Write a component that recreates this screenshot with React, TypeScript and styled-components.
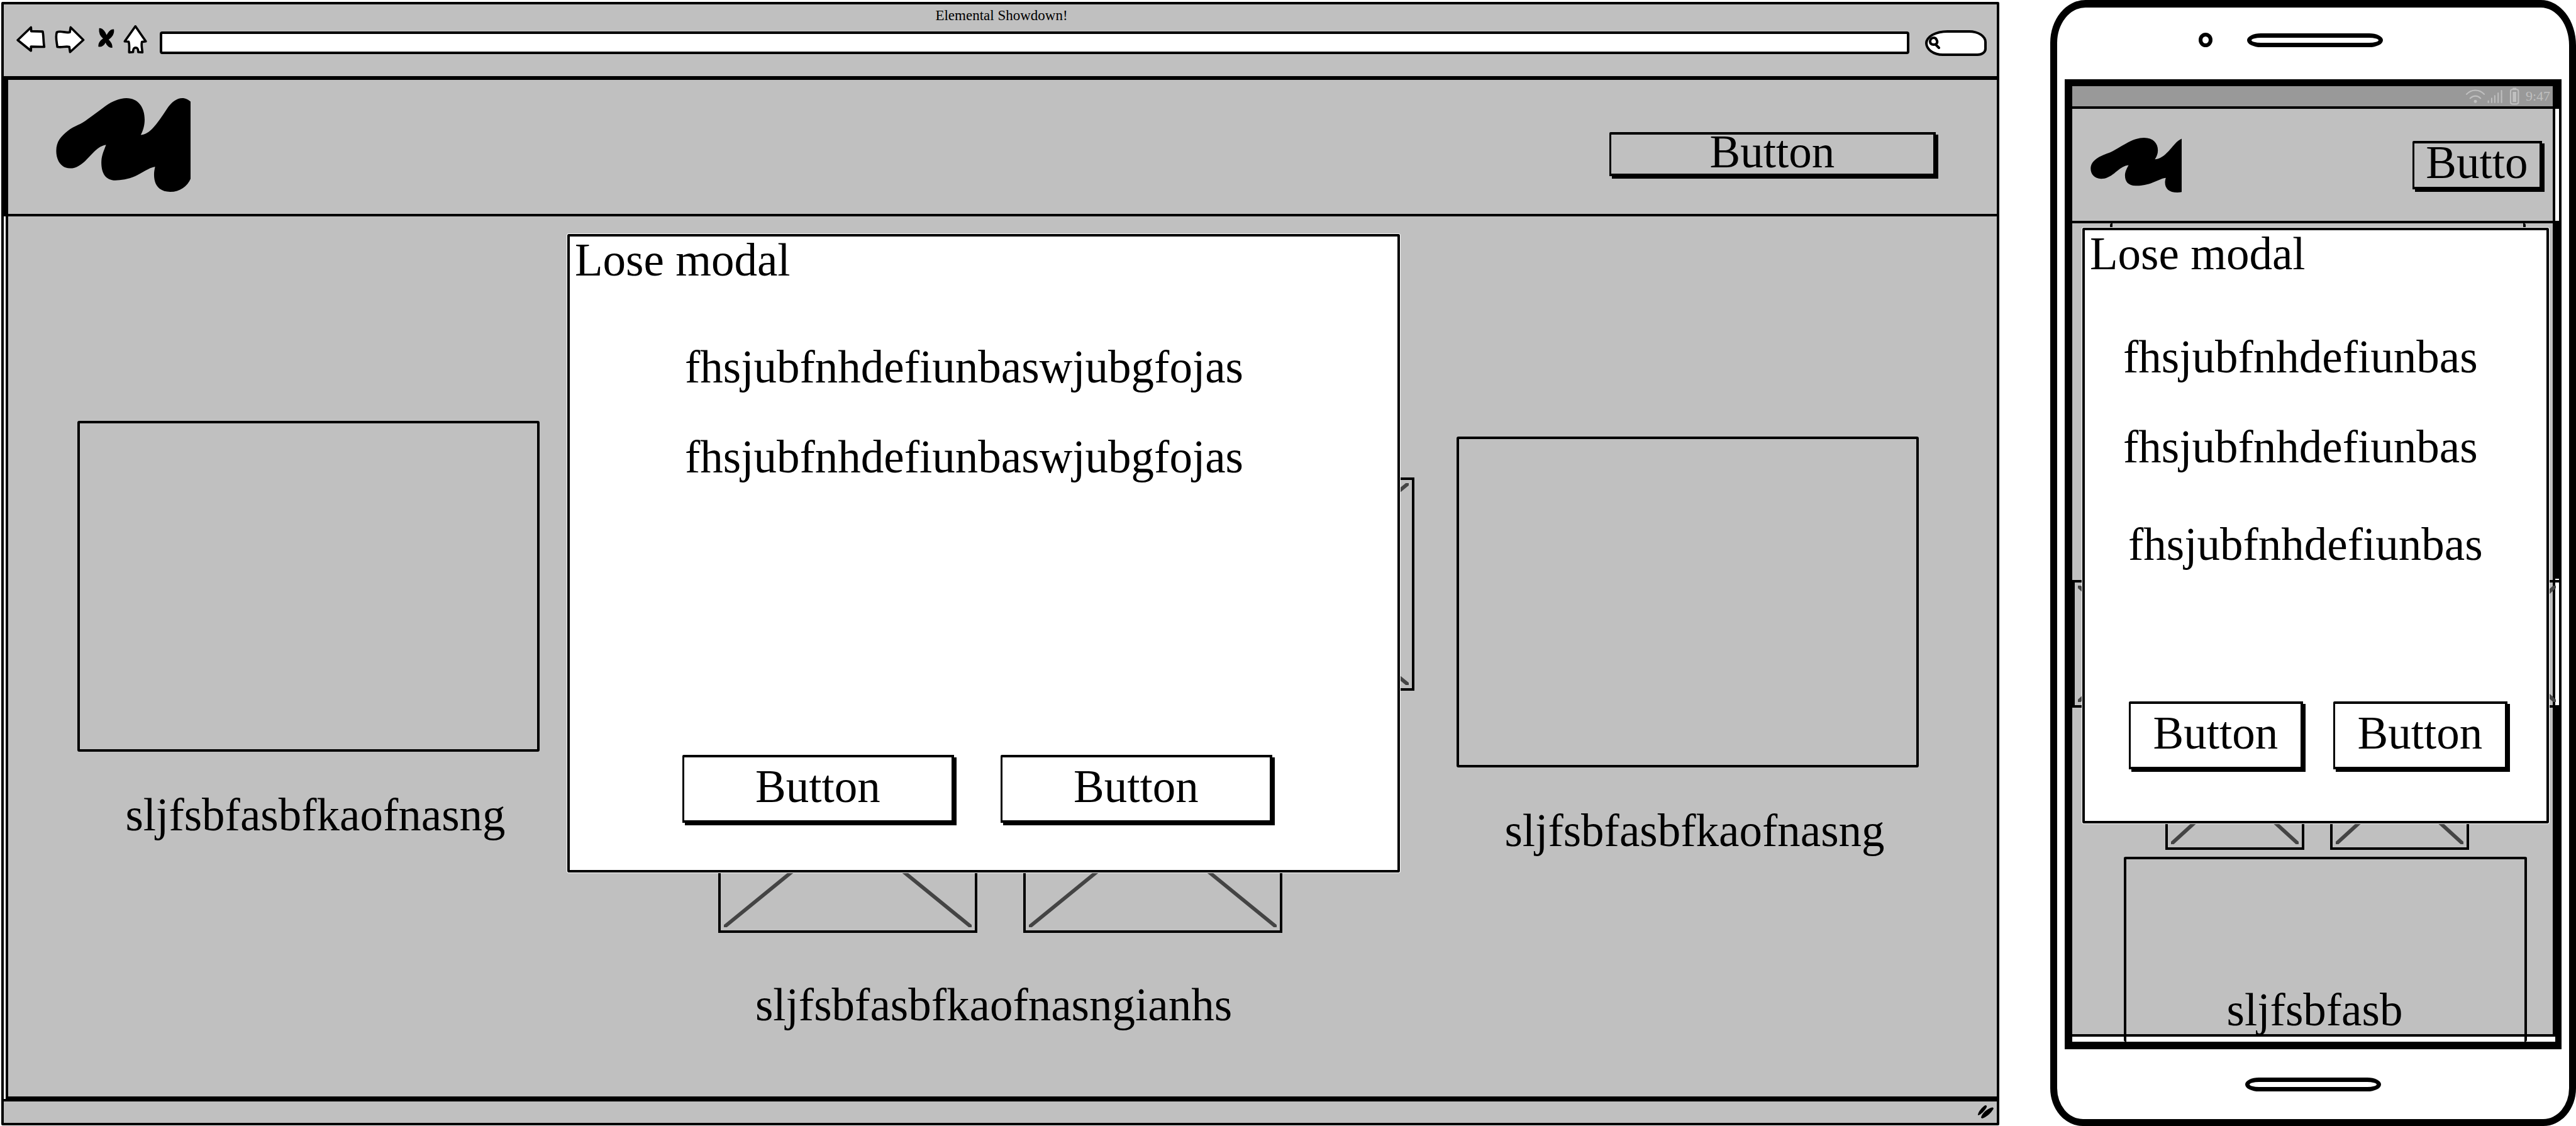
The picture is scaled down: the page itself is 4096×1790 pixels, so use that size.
import React from "react";
import styled, { createGlobalStyle } from "styled-components";

const INK = "#000";
const GREY = "#c0c0c0";
const PAPER = "#fff";

const GlobalStyle = createGlobalStyle`
  *, *::before, *::after { box-sizing: border-box; }
  body {
    margin: 0;
    background: ${PAPER};
    color: ${INK};
    font-family: "Liberation Serif", "Times New Roman", serif;
    font-size: 73px;
    line-height: 72px;
  }
  h1, h2, p { margin: 0; font-weight: 400; font-size: inherit; }
  button, input { font: inherit; color: inherit; }
`;

const Page = styled.div`
  display: grid;
  grid-template-columns: minmax(0, 1fr) 836px;
  gap: 81px;
  min-height: 100vh;
`;

/* ---------- shared parts ---------- */

const SketchButton = styled.button<{ $width: number; $height: number }>`
  flex: 0 1 ${(p) => p.$width}px;
  width: ${(p) => p.$width}px;
  height: ${(p) => p.$height}px;
  padding: 0 0 6px;
  border: 4px solid ${INK};
  border-left-width: 3px;
  border-radius: 2px 0 0 0;
  background: transparent;
  box-shadow: 4px 4px 0 ${INK};
  line-height: 48px;
  text-align: center;
  white-space: nowrap;
`;

const Card = styled.div<{ $height: number }>`
  height: ${(p) => p.$height}px;
  border: 4px solid ${INK};
  border-radius: 3px;
`;

const Caption = styled.p<{ $gap: number; $shift?: number }>`
  margin-top: ${(p) => p.$gap}px;
  padding-left: ${(p) => p.$shift ?? 0}px;
  text-align: center;
  white-space: nowrap;
`;

const CrossFrame = styled.div<{ $width: number; $height: number }>`
  flex: 0 0 ${(p) => p.$width}px;
  height: ${(p) => p.$height}px;
  padding: 5px;
  border: 4px solid ${INK};

  svg { display: block; width: 100%; height: 100%; }
`;

function Placeholder({ width, height }: { width: number; height: number }) {
  return (
    <CrossFrame $width={width} $height={height}>
      <svg viewBox="0 0 100 100" preserveAspectRatio="none" aria-hidden="true">
        <path d="M0 0L100 100M100 0L0 100" stroke="#444" strokeWidth="6" vectorEffect="non-scaling-stroke" />
      </svg>
    </CrossFrame>
  );
}

const PlaceholderRow = styled.div<{ $top: number; $gap: number }>`
  display: flex;
  gap: ${(p) => p.$gap}px;
  margin-top: ${(p) => p.$top}px;
`;

const Overlay = styled.div`
  position: absolute;
  inset: 0;
`;

const Dialog = styled.section`
  padding: 2px 8px 0;
  border: 4px solid ${INK};
  border-radius: 2px;
  outline: 1px solid ${PAPER};
  background: ${PAPER};
  white-space: nowrap;
`;

const DialogText = styled.div<{ $top: number; $indent: number }>`
  display: grid;
  gap: 71px;
  padding: ${(p) => p.$top}px 0 0 ${(p) => p.$indent}px;
`;

const LowLine = styled.p`
  padding: 12px 0 0 8px;
`;

const DialogActions = styled.div<{ $top: number; $bottom: number; $indent: number; $gap: number }>`
  display: flex;
  gap: ${(p) => p.$gap}px;
  padding: ${(p) => p.$top}px 0 ${(p) => p.$bottom}px ${(p) => p.$indent}px;
`;

const LogoSvg = styled.svg`
  display: block;
  flex: none;
`;

function Logo({ width, height, crop }: { width: number; height: number; crop: number }) {
  return (
    <LogoSvg width={width} height={height} viewBox={`0 0 ${crop} 179`} preserveAspectRatio="none" role="img" aria-label="Logo">
      <path d="M.5 101C.5 82 10 73 22 63C36 52 48 51 61 40C72 32 84 23 95 15C108 6 122 0 135 0C158 0 170 18 170 41C170 52 167 62 162.5 70.3C182 70 198 42 213 20C222 7 232 0 242 0C249 0 254 3 258 6.700V154C252 168 238 179 219 179C198 179 188 166 188 146C188 140 189 136 190 131C178 133 165 143 152 149C138 155 124 157 114 157C95 157 87 143 87 123C87 110 92 100 96 89.300C75 92 62 120 44 129C38 133 33 134 27 134C10 134 .5 119 .5 101Z" />
    </LogoSvg>
  );
}

/* ---------- browser ---------- */

const Browser = styled.div`
  display: flex;
  flex-direction: column;
  margin: 3px 0 1px 2px;
  border: 4px solid ${INK};
  border-radius: 2px;
  background: ${GREY};
`;

const Chrome = styled.div`
  padding: 6px 16px 22px 20px;
  border-bottom: 6px solid ${INK};
`;

const WindowTitle = styled.h1`
  text-align: center;
  && { font-size: 23px; }
  line-height: 24px;
`;

const Toolbar = styled.div`
  display: flex;
  align-items: center;
  gap: 12px;
  height: 62px;
`;

const ToolButton = styled.button`
  flex: none;
  padding: 0;
  border: 0;
  background: none;
  line-height: 0;
`;

const AddressBar = styled.input`
  flex: 1;
  min-width: 0;
  height: 36px;
  padding: 0 12px;
  border: 4px solid ${INK};
  border-radius: 4px;
  background: ${PAPER};
  font-size: 23px;
`;

const SearchPill = styled.label`
  display: flex;
  align-items: center;
  width: 98px;
  height: 41px;
  margin-left: 13px;
  padding-left: 2px;
  border: 4px solid ${INK};
  border-radius: 38px 30px 16px 30px / 22px 20px 12px 22px;
  background: ${PAPER};

  svg { flex: none; }
`;

const SearchInput = styled.input`
  width: 100%;
  min-width: 0;
  height: 24px;
  padding: 0;
  border: 0;
  background: none;
  font-size: 22px;
`;

type IconProps = { label: string; x: number; width: number; d: string; solid?: boolean };

const toolIcons: IconProps[] = [
  { label: "Back", x: 31.4, width: 49, d: "M34 77L59.5 52.5L60 60L82 60.5C84 70 83 80 85 90L59.5 89.5V97.5Z" },
  { label: "Forward", x: 105, width: 53, d: "M160 76.7L135.5 52.5L134 62C126 64 116 58 109 62C106 72 109 80 110 90C118 92 126 88 133 90L134.5 100Z" },
  { label: "Stop", x: 183.5, width: 32, solid: true, d: "M191 55C197 54 202 62 204.500 69C208 63 212 56 218 57C219 66 214 71 207.500 76C212 80 215 85 215 91C208 91 205 86 202.500 80C200 86 196 90 189.500 89C189 83 193 78 199 74C194 70 190 63 191 55Z" },
  { label: "Home", x: 236.7, width: 46, d: "M260 50.5L280 79.5L272.5 80.5C271 88 273 94 273.5 100.5L265.5 100C265 96 266 92 260.5 91.5C255 92 256 96 255.5 100L248 100.5C248 94 249 86 247 80L239.5 79.5Z" },
];

function ToolIcon({ label, x, width, d, solid }: IconProps) {
  return (
    <ToolButton type="button" aria-label={label}>
      <svg width={width} height="62" viewBox={`${x} 44.7 ${width / 0.828} 74.9`}>
        <path d={d} fill={solid ? INK : PAPER} stroke={INK} strokeWidth={solid ? 1.6 : 4.4} strokeLinejoin="round" />
      </svg>
    </ToolButton>
  );
}

const SiteHeader = styled.header`
  display: flex;
  align-items: flex-start;
  justify-content: space-between;
  height: 217px;
  padding: 29px 97px 0 76px;
  border-left: 7px solid ${INK};
  border-bottom: 4px solid ${INK};

  ${SketchButton} { margin-top: 54px; }
`;

const Gutter = styled.div`
  display: flex;
  flex: 1;
  padding-left: 3px;
  background: ${PAPER};
`;

const Board = styled.main`
  position: relative;
  flex: 1;
  display: grid;
  grid-template-columns: 735fr 1458fr 735fr;
  padding: 0 124px 0 110px;
  border-left: 4px solid ${INK};
  border-bottom: 4px solid ${INK};
  background: ${GREY};
`;

const Column = styled.div<{ $top: number }>`
  min-width: 0;
  padding-top: ${(p) => p.$top}px;
`;

const UpperRow = styled(PlaceholderRow)`
  justify-content: flex-end;
  padding-right: 67px;
`;

const LowerRow = styled(PlaceholderRow)`
  justify-content: center;
  padding-left: 6px;
`;

const CentreCaption = styled(Caption)`
  padding-right: 14px;
`;

const DesktopOverlay = styled(Overlay)`
  padding: 28px 949px 0 889px;
`;

const StatusStrip = styled.footer`
  display: flex;
  justify-content: flex-end;
  align-items: center;
  height: 38px;
  padding-right: 5px;
  border-top: 4px solid ${INK};
`;

function BrowserMock() {
  return (
    <Browser>
      <Chrome>
        <WindowTitle>Elemental Showdown!</WindowTitle>
        <Toolbar>
          {toolIcons.map((icon) => (
            <ToolIcon key={icon.label} {...icon} />
          ))}
          <AddressBar type="text" aria-label="Address" />
          <SearchPill>
            <svg width="18" height="20" viewBox="0 0 18 20" aria-hidden="true">
              <path d="M8 2C4 2 2 5 2 8C2 12 5 13 8 13C12 13 14 10 13 7C12 4 11 2 8 2ZM11 13L16 18" fill="none" stroke={INK} strokeWidth="4" strokeLinecap="round" />
            </svg>
            <SearchInput type="text" aria-label="Search" />
          </SearchPill>
        </Toolbar>
      </Chrome>

      <SiteHeader>
        <Logo width={214} height={149} crop={258} />
        <SketchButton type="button" $width={519} $height={70}>Button</SketchButton>
      </SiteHeader>

      <Gutter>
        <Board>
          <Column $top={325}>
            <Card $height={526} />
            <Caption $gap={65} $shift={22}>sljfsbfasbfkaofnasng</Caption>
          </Column>
          <Column $top={415}>
            <UpperRow $top={0} $gap={73}>
              <Placeholder width={412} height={339} />
              <Placeholder width={412} height={339} />
            </UpperRow>
            <LowerRow $top={46} $gap={73}>
              <Placeholder width={412} height={339} />
              <Placeholder width={412} height={339} />
            </LowerRow>
            <CentreCaption $gap={79}>sljfsbfasbfkaofnasngianhs</CentreCaption>
          </Column>
          <Column $top={350}>
            <Card $height={526} />
            <Caption $gap={65} $shift={22}>sljfsbfasbfkaofnasng</Caption>
          </Column>

          <DesktopOverlay>
            <Dialog role="dialog" aria-labelledby="lose-title">
              <h2 id="lose-title">Lose modal</h2>
              <DialogText $top={98} $indent={175}>
                <p>fhsjubfnhdefiunbaswjubgfojas</p>
                <p>fhsjubfnhdefiunbaswjubgfojas</p>
              </DialogText>
              <DialogActions $top={437} $bottom={75} $indent={171} $gap={74}>
                <SketchButton type="button" $width={432} $height={108}>Button</SketchButton>
                <SketchButton type="button" $width={432} $height={108}>Button</SketchButton>
              </DialogActions>
            </Dialog>
          </DesktopOverlay>
        </Board>
      </Gutter>

      <StatusStrip>
        <svg width="26" height="22" viewBox="0 0 31 26" aria-hidden="true">
          <path d="M1 18C3 11 8 5 15 0C18 0 19 2 17 5C13 11 8 17 2 19ZM7 23C10 14 18 7 28 4C31 4 32 6 29 9C24 17 17 22 9 25Z" />
        </svg>
      </StatusStrip>
    </Browser>
  );
}

/* ---------- phone ---------- */

const Phone = styled.div`
  display: flex;
  flex-direction: column;
  padding: 0 12px;
  border: 11px solid ${INK};
  border-top-width: 12px;
  border-radius: 56px 56px 52px 52px / 68px 72px 60px 60px;
`;

const TopBezel = styled.div`
  display: flex;
  align-items: center;
  gap: 55px;
  height: 114px;
  padding: 0 0 11px 213px;
`;

const Camera = styled.span`
  width: 22px;
  height: 23px;
  border: 6px solid ${INK};
  border-radius: 50%;
`;

const Slot = styled.span`
  width: 216px;
  height: 22px;
  border: 7px solid ${INK};
  border-radius: 24px / 12px;
`;

const BottomBezel = styled.div`
  display: flex;
  justify-content: center;
  align-items: center;
  height: 111px;
`;

const Screen = styled.div`
  flex: 1;
  display: flex;
  flex-direction: column;
  border-style: solid;
  border-color: ${INK};
  border-width: 11px 4px 12px 12px;
`;

const StatusBar = styled.div`
  display: flex;
  justify-content: flex-end;
  align-items: center;
  gap: 8px;
  height: 36px;
  padding-right: 4px;
  border-right: 10px solid ${INK};
  border-bottom: 4px solid ${INK};
  background: #999;
  color: ${GREY};
  font-size: 22px;
  line-height: 24px;
`;

const PhoneHeaderWrap = styled.div`
  padding-right: 6px;
  border-bottom: 4px solid ${INK};
  background: ${PAPER};
`;

const PhoneHeader = styled.header`
  display: flex;
  align-items: center;
  justify-content: space-between;
  height: 178px;
  padding: 0 17px 0 29px;
  border-right: 4px solid ${INK};
  background: ${GREY};
`;

/* The strip right of the canvas is solid except beside the placeholder row. */
const PhoneBody = styled.div`
  flex: 1;
  display: flex;
  padding: 0 6px 8px 0;
  background:
    linear-gradient(${INK} 565px, ${PAPER} 565px 768px, ${INK} 768px) right top / 6px 100% no-repeat,
    ${PAPER};
`;

const Canvas = styled.main`
  position: relative;
  flex: 1;
  border-right: 4px solid ${INK};
  border-bottom: 4px solid ${INK};
  background: ${GREY};
`;

const UpperCard = styled(Card)`
  margin: 0 43px 0 60px;
  border-top: 0;
`;

const EdgeRow = styled(PlaceholderRow)`
  justify-content: space-between;
  margin-right: -14px;
`;

const InnerRow = styled(PlaceholderRow)`
  padding-left: 148px;
`;

const LowerCard = styled(Card)`
  margin: 11px 41px -12px 82px;
  padding-right: 34px;
  border-bottom: 0;
`;

const PhoneOverlay = styled(Overlay)`
  padding: 7px 6px 0 16px;
`;

function StatusIcons() {
  return (
    <svg width="88" height="28" viewBox="0 0 106 34" fill="none" stroke={GREY} strokeLinecap="round" aria-hidden="true">
      <path d="M2 13C12 3 26 3 36 13M9 21C15 15 23 15 29 21" strokeWidth="2.6" />
      <circle cx="19" cy="27" r="3" fill={GREY} stroke="none" />
      <path d="M44 26V29M50.500 21V29M56.500 16V29M63 11V29M69.500 6V29" strokeWidth="2.4" />
      <path d="M90 4H99Q102 4 102 8V28Q102 32 98.500 32H90.500Q87 32 87 28V8Q87 4 90 4ZM92 2H97" strokeWidth="2.6" />
      <path d="M91 8.500H98V28H91Z" fill={GREY} stroke="none" />
    </svg>
  );
}

function PhoneMock() {
  return (
    <Phone>
      <TopBezel>
        <Camera />
        <Slot />
      </TopBezel>
      <Screen>
        <StatusBar>
          <StatusIcons />
          <span>9:47</span>
        </StatusBar>
        <PhoneHeaderWrap>
          <PhoneHeader>
            <Logo width={145} height={87} crop={230} />
            <SketchButton type="button" $width={206} $height={77}>Butto</SketchButton>
          </PhoneHeader>
        </PhoneHeaderWrap>
        <PhoneBody>
          <Canvas>
            <UpperCard $height={500} />
            <EdgeRow $top={67} $gap={41}>
              <Placeholder width={221} height={203} />
              <Placeholder width={221} height={203} />
            </EdgeRow>
            <InnerRow $top={23} $gap={41}>
              <Placeholder width={221} height={203} />
              <Placeholder width={221} height={203} />
            </InnerRow>
            <LowerCard $height={294}>
              <Caption $gap={204}>sljfsbfasb</Caption>
            </LowerCard>

            <PhoneOverlay>
              <Dialog role="dialog" aria-labelledby="lose-title-small">
                <h2 id="lose-title-small">Lose modal</h2>
                <DialogText $top={92} $indent={53}>
                  <p>fhsjubfnhdefiunbas</p>
                  <p>fhsjubfnhdefiunbas</p>
                  <LowLine>fhsjubfnhdefiunbas</LowLine>
                </DialogText>
                <DialogActions $top={213} $bottom={82} $indent={62} $gap={48}>
                  <SketchButton type="button" $width={277} $height={108}>Button</SketchButton>
                  <SketchButton type="button" $width={277} $height={108}>Button</SketchButton>
                </DialogActions>
              </Dialog>
            </PhoneOverlay>
          </Canvas>
        </PhoneBody>
      </Screen>
      <BottomBezel>
        <Slot />
      </BottomBezel>
    </Phone>
  );
}

export default function App() {
  return (
    <>
      <GlobalStyle />
      <Page>
        <BrowserMock />
        <PhoneMock />
      </Page>
    </>
  );
}
